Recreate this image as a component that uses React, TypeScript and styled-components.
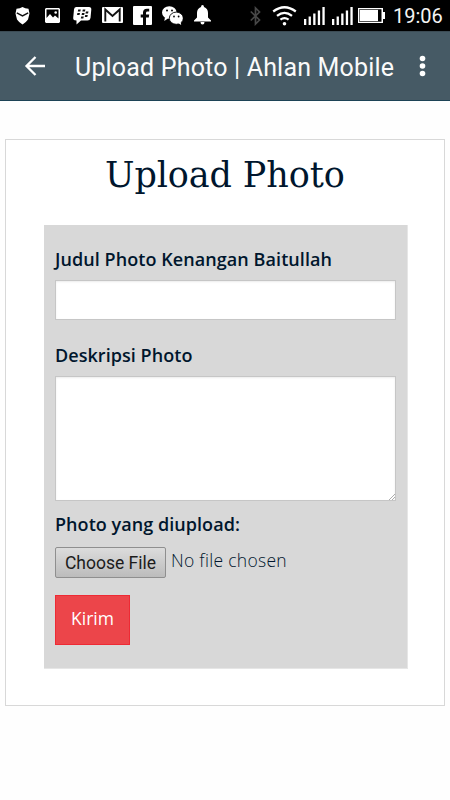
import React from 'react';
import styled, { createGlobalStyle } from 'styled-components';

const Global = createGlobalStyle`
  * { box-sizing: border-box; }
  body { margin: 0; background: #fff; }
`;

const Screen = styled.div`
  width: 450px;
  height: 800px;
  overflow: hidden;
  background: #fefefe;
  color: #00162d;
  font-family: 'Open Sans', sans-serif;
`;

const StatusBar = styled.div`
  height: 31px;
  background: #000;
  display: flex;
  align-items: flex-start;
`;

const StatusIcon = styled.svg<{ $gap: number; $top: number }>`
  flex: none;
  display: block;
  margin-left: ${(p) => p.$gap}px;
  margin-top: ${(p) => p.$top}px;
  fill: #fff;
`;

const Clock = styled.span`
  margin-left: 8px;
  margin-top: 5px;
  font: 400 20px/23px Roboto, sans-serif;
  color: #f4f4f4;
`;

const AppBar = styled.header`
  height: 70px;
  background: #465a65;
  border-top: 1px solid #3c4c55;
  border-bottom: 1px solid #1d4356;
  display: flex;
  align-items: center;
  padding-left: 24px;
`;

const AppTitle = styled.h1`
  margin: 4px 0 0 29px;
  width: 320px;
  white-space: nowrap;
  font: 400 25px/32px Roboto, sans-serif;
  letter-spacing: 0.18px;
  color: #fafafa;
`;

const MoreIcon = styled.svg`
  margin-left: 24px;
  fill: #fff;
`;

const Card = styled.main`
  margin: 38px 5px 0;
  height: 567px;
  border: 1px solid #d8d8d8;
  background: #fff;
  padding: 0 36px 0 38px;
`;

const Heading = styled.h2`
  margin: 0;
  height: 85px;
  padding: 10px 0 0 61px;
  white-space: nowrap;
  font: 400 35px/50px 'Roboto Slab', 'DejaVu Serif', serif;
  letter-spacing: -0.1px;
`;

const Form = styled.form`
  height: 444px;
  background: #d8d8d8;
  border: solid #e6e6e6;
  border-width: 0 1px 1px 0;
  padding: 22px 10px 0 11px;
  display: flex;
  flex-direction: column;
  align-items: flex-start;
`;

const Label = styled.label<{ $spacing: number }>`
  font-size: 18px;
  font-weight: 600;
  line-height: 24px;
  letter-spacing: ${(p) => p.$spacing}px;
  white-space: nowrap;
`;

const TextInput = styled.input`
  display: block;
  width: 341px;
  height: 40px;
  margin: 9px 0 23px;
  border: 1px solid #c6c6c6;
  border-radius: 0;
  background: #fff;
  box-shadow: inset 0 1px 2px rgba(0, 0, 0, 0.08);
  outline: none;
`;

const TextAreaFrame = styled.div`
  width: 341px;
  height: 125px;
  margin: 9px 0 11px;
  border: 1px solid #c6c6c6;
  background: #fff;
  box-shadow: inset 0 1px 2px rgba(0, 0, 0, 0.08);
  display: flex;
  align-items: flex-end;
`;

const TextArea = styled.textarea`
  flex: 1;
  height: 100%;
  border: 0;
  padding: 8px;
  resize: none;
  outline: none;
  background: transparent;
`;

const FileRow = styled.div`
  display: flex;
  align-items: flex-start;
  margin-top: 11px;
  height: 48px;
`;

const FileButton = styled.button`
  width: 111px;
  height: 31px;
  padding: 1px 0 0;
  border: 1px solid #8f8f8f;
  border-radius: 2px;
  background: linear-gradient(#dcdcdc, #bcbcbc);
  font: 400 17.5px/26px Roboto, sans-serif;
  color: #1c1c1c;
  white-space: nowrap;
`;

const FileStatus = styled.span`
  margin-left: 5px;
  font-size: 17.5px;
  font-weight: 300;
  line-height: 26px;
  letter-spacing: 0.3px;
  white-space: nowrap;
  color: #00162d;
`;

const Submit = styled.button`
  width: 75px;
  height: 50px;
  padding: 0 0 4px;
  border: 1px solid #ee2a34;
  background: #ec454a;
  color: #fff;
  font: 400 17.5px/24px 'Open Sans', sans-serif;
`;

const signalBars = [
  [0, 12],
  [4.6, 9.5],
  [9.2, 6.5],
  [13.8, 3.5],
  [18.4, 0],
];

function Signal({ gap }: { gap: number }) {
  return (
    <StatusIcon $gap={gap} $top={7} width="21" height="18" viewBox="0 0 21 18">
      {signalBars.map(([x, y]) => (
        <rect key={x} x={x} y={y} width="2.3" height={18 - y} />
      ))}
    </StatusIcon>
  );
}

export default function App() {
  return (
    <>
      <Global />
      <Screen>
        <StatusBar>
          <StatusIcon $gap={15} $top={7} width="15" height="18" viewBox="0 0 15 18">
            <path d="M1.500 1.800Q5 1.800 7.500 0Q10 1.800 13.500 1.800L14.500 6.500L13 12.500Q11 15.500 7.500 17.500Q4 15.500 2 12.500L.5 6.500Z" />
            <path d="M1.800 5.800L7.500 8.800L13.200 5.800" fill="none" stroke="#111" strokeWidth="1.500" />
          </StatusIcon>
          <StatusIcon $gap={15} $top={8} width="15" height="15" viewBox="0 0 15 15">
            <path fillRule="evenodd" d="M1 0H14L15 1V14L14 15H1L0 14V1ZM1.500 1.500V10L5 6L8 9.500L10 7.500L13.500 10.500V1.500Z" />
            <circle cx="10.700" cy="4.500" r="1.300" />
          </StatusIcon>
          <StatusIcon $gap={13} $top={7} width="19" height="18" viewBox="0 0 19 18">
            <path d="M3 0H16Q18.500 0 18.300 2.500L17.500 11Q17 13.500 14.500 13.500H8L3.500 17.500V13.500Q0 13.500 .2 11L1 2.500Q1.200 0 3 0Z" />
            <g fill="#111">
              <path d="M5.200 2.600H7.800L7.300 4.600H4.800ZM9.800 2.600H12.400L11.900 4.600H9.400ZM4.400 6H7L6.500 8H4ZM9 6H11.600L11.100 8H8.600ZM12.900 4.500H15.500L15 6.500H12.500ZM12.200 8H14.800L14.300 10H11.800ZM8.200 9.400H10.800L10.300 11.400H7.800Z" />
            </g>
          </StatusIcon>
          <StatusIcon $gap={10} $top={7} width="21" height="16" viewBox="0 0 21 16">
            <rect width="21" height="16" rx="1" />
            <path d="M3.300 14.500V2.500L10.500 9L17.700 2.500V14.500" fill="none" stroke="#111" strokeWidth="1.900" />
          </StatusIcon>
          <StatusIcon $gap={10} $top={6} width="19" height="19" viewBox="0 0 19 19">
            <rect width="19" height="19" rx="1" />
            <path d="M10 19V11.500H7.700V8.500H10V6.500Q10 2.700 14 2.700H16.200V5.600H14.500Q13 5.600 13 7V8.500H16.200L15.800 11.500H13V19Z" fill="#080808" />
          </StatusIcon>
          <StatusIcon $gap={10} $top={6} width="21" height="19" viewBox="0 0 21 19">
            <ellipse cx="7.300" cy="6.500" rx="7.300" ry="6.300" />
            <path d="M3 11L2.300 15L6 12.500Z" />
            <ellipse cx="14.300" cy="12.200" rx="7" ry="6.100" stroke="#080808" strokeWidth=".9" />
            <path d="M16 17L19.200 19L18.500 15Z" />
            <g fill="#080808">
              <circle cx="5" cy="4.500" r="1" />
              <circle cx="10" cy="4.500" r="1" />
              <circle cx="12" cy="10.500" r=".9" />
              <circle cx="16.600" cy="10.500" r=".9" />
            </g>
          </StatusIcon>
          <StatusIcon $gap={11} $top={5} width="17" height="20" viewBox="0 0 17 20">
            <path d="M8.500 0Q10 0 10 2Q14 3.500 14 8V12.500L17 15.500V16.500H0V15.500L3 12.500V8Q3 3.500 7 2Q7 0 8.500 0ZM6.500 17H10.500Q10.500 19.500 8.500 19.500Q6.500 19.500 6.500 17Z" />
          </StatusIcon>
          <StatusIcon $gap={39} $top={6} width="11" height="20" viewBox="0 0 11 20">
            <path d="M.8 5.500L9.500 14L5.500 18V2L9.500 6L.8 14.500" fill="none" stroke="#484848" strokeWidth="1.700" />
          </StatusIcon>
          <StatusIcon $gap={11} $top={6} width="25" height="20" viewBox="0 0 25 20">
            <g fill="none" stroke="#fff" strokeWidth="2.300">
              <path d="M1.200 5.500Q12.500-3 23.800 5.500" />
              <path d="M5 9.800Q12.500 4 20 9.800" />
              <path d="M8.400 13.700Q12.500 10.500 16.600 13.700" />
            </g>
            <circle cx="12.500" cy="17.800" r="1.800" />
          </StatusIcon>
          <Signal gap={7} />
          <Signal gap={7} />
          <StatusIcon $gap={5} $top={8} width="27" height="15" viewBox="0 0 27 15">
            <path fillRule="evenodd" d="M0 0H25V4H27V11H25V15H0ZM1.200 1.200V13.800H23.500V1.200Z" />
            <rect x="1.700" y="1.900" width="18.300" height="11.200" />
          </StatusIcon>
          <Clock>19:06</Clock>
        </StatusBar>

        <AppBar>
          <svg width="22" height="20" viewBox="0 0 22 20" fill="none" stroke="#fff" strokeWidth="2.300">
            <path d="M21 10H3M11.500 1L2.500 10L11.500 19" />
          </svg>
          <AppTitle>Upload Photo | Ahlan Mobile</AppTitle>
          <MoreIcon width="7" height="22" viewBox="0 0 7 22">
            <circle cx="3.500" cy="3.500" r="2.800" />
            <circle cx="3.500" cy="11" r="2.800" />
            <circle cx="3.500" cy="18.500" r="2.800" />
          </MoreIcon>
        </AppBar>

        <Card>
          <Heading>Upload Photo</Heading>
          <Form onSubmit={(e) => e.preventDefault()}>
            <Label htmlFor="judul" $spacing={0.07}>Judul Photo Kenangan Baitullah</Label>
            <TextInput id="judul" />
            <Label htmlFor="deskripsi" $spacing={0.05}>Deskripsi Photo</Label>
            <TextAreaFrame>
              <TextArea id="deskripsi" />
              <svg width="6" height="6" viewBox="0 0 6 6" stroke="#999" strokeWidth=".8">
                <path d="M0 6L6 0M3 6L6 3" />
              </svg>
            </TextAreaFrame>
            <Label $spacing={0.05}>Photo yang diupload:</Label>
            <FileRow>
              <FileButton type="button">Choose File</FileButton>
              <FileStatus>No file chosen</FileStatus>
            </FileRow>
            <Submit type="submit">Kirim</Submit>
          </Form>
        </Card>
      </Screen>
    </>
  );
}
